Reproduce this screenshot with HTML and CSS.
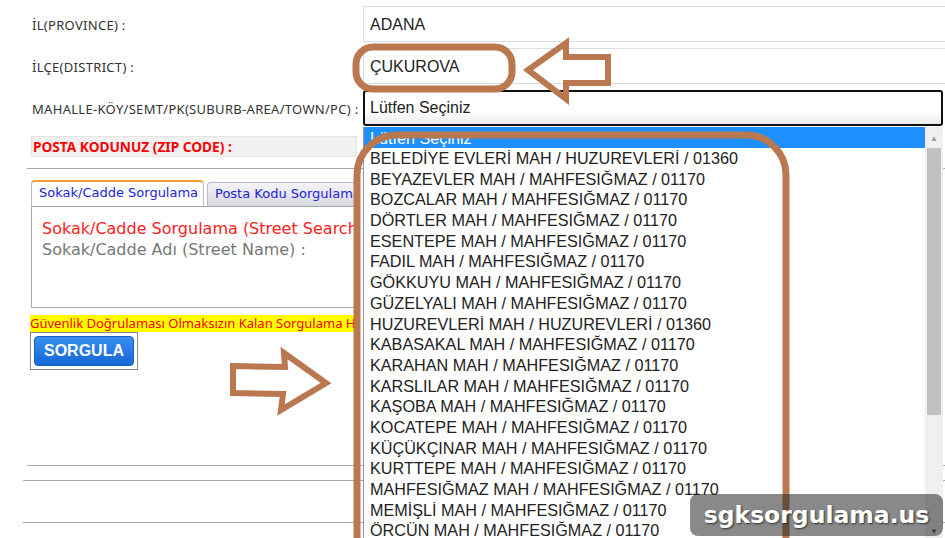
FILE: index.html
```html
<!DOCTYPE html>
<html lang="tr">
<head>
    <meta charset="UTF-8">
    <title>Posta Kodu Sorgulama</title>
    <link rel="stylesheet" href="styles.css">
</head>
<body>
    <!-- Address rows -->
    <div class="address-form">
        <div class="field-row">
            <div class="field-label">İL(PROVINCE) :</div>
            <div class="field-box">ADANA</div>
        </div>
        <div class="field-row">
            <div class="field-label">İLÇE(DISTRICT) :</div>
            <div class="field-box">ÇUKUROVA</div>
        </div>
        <div class="field-row">
            <div class="field-label">MAHALLE-KÖY/SEMT/PK(SUBURB-AREA/TOWN/PC) :</div>
            <div class="field-select">Lütfen Seçiniz</div>
        </div>
    </div>

    <div class="zip-row">POSTA KODUNUZ (ZIP CODE) :</div>
    <div class="rule rule-first"></div>

    <!-- Search tabs -->
    <section class="search-box">
        <div class="tabs">
            <div class="tab tab-active">Sokak/Cadde Sorgulama</div>
            <div class="tab">Posta Kodu Sorgulama</div>
        </div>
        <div class="tab-panel">
            <p class="panel-title">Sokak/Cadde Sorgulama (Street Search)</p>
            <p class="panel-label">Sokak/Cadde Adı (Street Name) :</p>
        </div>
        <div class="warning">Güvenlik Doğrulaması Olmaksızın Kalan Sorgulama Hakkınız</div>
        <div class="button-frame">
            <button class="search-button">SORGULA</button>
        </div>
    </section>

    <div class="rule rule-a"></div>
    <div class="rule rule-b"></div>
    <div class="rule rule-c"></div>

    <!-- Open dropdown list -->
    <div class="dropdown">
        <div class="dropdown-items">
            <div class="option option-selected">Lütfen Seçiniz</div>
            <div class="option">BELEDİYE EVLERİ MAH / HUZUREVLERİ / 01360</div>
            <div class="option">BEYAZEVLER MAH / MAHFESIĞMAZ / 01170</div>
            <div class="option">BOZCALAR MAH / MAHFESIĞMAZ / 01170</div>
            <div class="option">DÖRTLER MAH / MAHFESIĞMAZ / 01170</div>
            <div class="option">ESENTEPE MAH / MAHFESIĞMAZ / 01170</div>
            <div class="option">FADIL MAH / MAHFESIĞMAZ / 01170</div>
            <div class="option">GÖKKUYU MAH / MAHFESIĞMAZ / 01170</div>
            <div class="option">GÜZELYALI MAH / MAHFESIĞMAZ / 01170</div>
            <div class="option">HUZUREVLERİ MAH / HUZUREVLERİ / 01360</div>
            <div class="option">KABASAKAL MAH / MAHFESIĞMAZ / 01170</div>
            <div class="option">KARAHAN MAH / MAHFESIĞMAZ / 01170</div>
            <div class="option">KARSLILAR MAH / MAHFESIĞMAZ / 01170</div>
            <div class="option">KAŞOBA MAH / MAHFESIĞMAZ / 01170</div>
            <div class="option">KOCATEPE MAH / MAHFESIĞMAZ / 01170</div>
            <div class="option">KÜÇÜKÇINAR MAH / MAHFESIĞMAZ / 01170</div>
            <div class="option">KURTTEPE MAH / MAHFESIĞMAZ / 01170</div>
            <div class="option">MAHFESIĞMAZ MAH / MAHFESIĞMAZ / 01170</div>
            <div class="option">MEMİŞLİ MAH / MAHFESIĞMAZ / 01170</div>
            <div class="option">ÖRCÜN MAH / MAHFESIĞMAZ / 01170</div>
        </div>
        <div class="scrollbar">
            <span class="scroll-arrow">&#9650;</span>
            <span class="scroll-thumb"></span>
            <span class="scroll-arrow scroll-arrow-down">&#9660;</span>
        </div>
    </div>

    <!-- Hand-drawn annotations -->
    <svg class="marks" width="945" height="538" viewBox="0 0 945 538">
        <rect x="356" y="47" width="156" height="42" rx="17" />
        <polygon points="528,70 566,43 566,57 608,57 608,83 566,83 566,99" />
        <rect x="357" y="135" width="429" height="440" rx="40" />
        <polygon points="233,366 285,367 284,353 326,383 281,410 283,394 233,393" />
    </svg>

    <div class="watermark">sgksorgulama.us</div>
</body>
</html>
```

FILE: styles.css
```css
/* Page */
body {
    margin: 0;
    width: 945px;
    height: 538px;
    overflow: hidden;
    position: relative;
    background: #fff;
    font-family: 'Noto Sans', sans-serif;
    color: #222;
}

/* Address rows */
.address-form {
    display: flex;
    flex-direction: column;
    gap: 6px;
    padding-top: 6px;
}

.field-row {
    display: grid;
    grid-template-columns: 363px 1fr;
    align-items: center;
    height: 36px;
}

.field-label {
    padding: 2px 0 0 32px;
    font-size: 13px;
    letter-spacing: 0.3px;
    color: #333;
    white-space: nowrap;
}

.field-box {
    height: 36px;
    box-sizing: border-box;
    border: 1px solid #dcdcdc;
    border-right: none;
    padding: 1px 0 0 6px;
    display: flex;
    align-items: center;
    font-family: 'Liberation Sans', Arial, sans-serif;
    font-size: 16px;
    color: #222;
}

.field-select {
    height: 36px;
    box-sizing: border-box;
    margin-right: 2px;
    border: 2px solid #111;
    border-radius: 3px;
    padding-left: 5px;
    display: flex;
    align-items: center;
    background: linear-gradient(#fff 60%, #ececec);
    font-family: 'Liberation Sans', Arial, sans-serif;
    font-size: 16px;
    color: #222;
}

.zip-row {
    margin: 10px 0 0 31px;
    width: 326px;
    height: 21px;
    box-sizing: border-box;
    background: #f1f1f1;
    border: 1px solid #e4e4e4;
    padding-left: 1px;
    line-height: 19px;
    font-size: 13.7px;
    font-weight: bold;
    color: #f00;
    white-space: nowrap;
}

.rule {
    height: 1px;
    background: #a9a9a9;
}

.rule-first {
    margin: 11px 0 0 27px;
}

/* Search tabs */
.search-box {
    margin: 11px 0 0 30px;
    width: 326px;
}

.tabs {
    display: flex;
    gap: 3px;
    padding-left: 1px;
    height: 26px;
    overflow: hidden;
    font-family: 'DejaVu Sans', Verdana, sans-serif;
    font-size: 13px;
}

.tab {
    flex-shrink: 0;
    padding: 0 7px;
    line-height: 22px;
    height: 24px;
    box-sizing: border-box;
    border: 1px solid #b8b8c8;
    border-bottom: none;
    border-radius: 4px 4px 0 0;
    color: #2222dd;
    background: linear-gradient(#f4f4f8, #d8d8e0);
    white-space: nowrap;
    margin-top: 2px;
}

.tab-active {
    width: 173px;
    height: 26px;
    margin-top: 0;
    border-top: 2px solid #f0a030;
    background: #fff;
}

.tab-panel {
    height: 102px;
    box-sizing: border-box;
    margin-left: 1px;
    border: 1px solid #a8a8a8;
    border-right: none;
    padding: 11px 0 0 10px;
    font-family: 'DejaVu Sans', Verdana, sans-serif;
    white-space: nowrap;
    overflow: hidden;
}

.panel-title {
    margin: 0;
    font-size: 16px;
    color: #f22;
    line-height: 21px;
}

.panel-label {
    margin: 0;
    font-size: 16px;
    color: #777;
    line-height: 21px;
}

.warning {
    margin-top: 7px;
    height: 17px;
    line-height: 17px;
    background: #ff0;
    color: #f00;
    font-size: 13px;
    white-space: nowrap;
    overflow: hidden;
}

.button-frame {
    width: 108px;
    height: 38px;
    box-sizing: border-box;
    border: 1px solid #888;
    padding: 3px;
}

.search-button {
    width: 100%;
    height: 100%;
    border: 1px solid #1a5fc0;
    border-radius: 4px;
    background: linear-gradient(#3a8ef0, #1667d8);
    color: #fff;
    font-family: 'Liberation Sans', Arial, sans-serif;
    font-size: 16px;
    font-weight: bold;
    padding: 0;
}

.rule-a {
    margin: 95px 0 0 27px;
}

.rule-b {
    margin: 14px 0 0 23px;
}

.rule-c {
    margin: 41px 0 0 23px;
}

/* Dropdown list */
.dropdown {
    position: absolute;
    left: 363px;
    top: 127px;
    width: 580px;
    height: 420px;
    display: flex;
    overflow: hidden;
    background: #fff;
    border-left: 1px solid #999;
    box-sizing: border-box;
}

.dropdown-items {
    flex: 1;
    font-family: 'Liberation Sans', Arial, sans-serif;
    font-size: 16.2px;
    color: #222;
}

.option {
    height: 20.7px;
    line-height: 20.7px;
    padding-left: 6px;
    white-space: nowrap;
}

.option-selected {
    height: 21px;
    line-height: 23px;
    overflow: hidden;
    background: #1e90ff;
    color: #fff;
}

.scrollbar {
    width: 18px;
    display: flex;
    flex-direction: column;
    align-items: center;
    background: #f0f0f0;
    height: 411px;
}

.scroll-arrow {
    font-size: 8px;
    color: #999;
    height: 21px;
    line-height: 21px;
}

.scroll-arrow-down {
    color: #555;
    margin-top: auto;
    height: 14px;
    line-height: 14px;
}

.scroll-thumb {
    width: 14px;
    height: 267px;
    background: #c1c1c1;
}

/* Annotations */
.marks {
    position: absolute;
    left: 0;
    top: 0;
    pointer-events: none;
}

.marks rect,
.marks polygon {
    fill: none;
    stroke: #b9784f;
    stroke-width: 7;
    stroke-linejoin: miter;
}

.marks polygon {
    stroke-width: 6;
}

/* Watermark */
.watermark {
    position: absolute;
    left: 690px;
    top: 494px;
    width: 253px;
    height: 42px;
    border-radius: 8px;
    background: rgba(40, 40, 40, 0.55);
    color: #fff;
    font-family: 'DejaVu Sans', Verdana, sans-serif;
    font-weight: bold;
    font-size: 23.5px;
    line-height: 42px;
    text-align: center;
    text-shadow: 1px 1px 2px #333;
}
```
